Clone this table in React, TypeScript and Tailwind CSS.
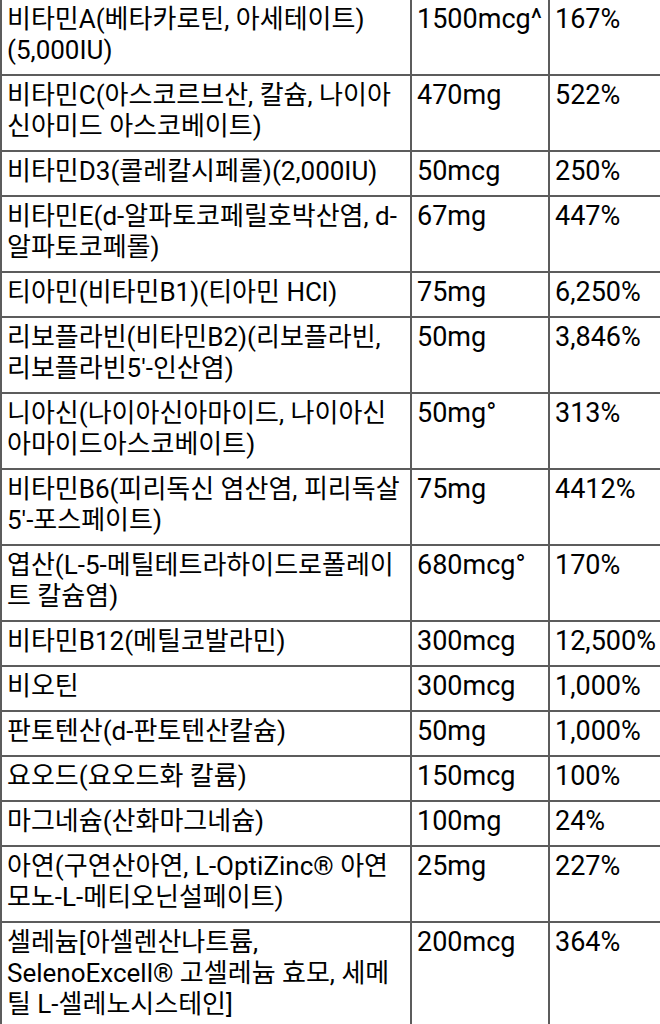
const rows: { name: string[]; amount: string; dv: string }[] = [
  { name: ["비타민A(베타카로틴, 아세테이트)", "(5,000IU)"], amount: "1500mcg^", dv: "167%" },
  { name: ["비타민C(아스코르브산, 칼슘, 나이아", "신아미드 아스코베이트)"], amount: "470mg", dv: "522%" },
  { name: ["비타민D3(콜레칼시페롤)(2,000IU)"], amount: "50mcg", dv: "250%" },
  { name: ["비타민E(d-알파토코페릴호박산염, d-", "알파토코페롤)"], amount: "67mg", dv: "447%" },
  { name: ["티아민(비타민B1)(티아민 HCl)"], amount: "75mg", dv: "6,250%" },
  { name: ["리보플라빈(비타민B2)(리보플라빈,", "리보플라빈5'-인산염)"], amount: "50mg", dv: "3,846%" },
  { name: ["니아신(나이아신아마이드, 나이아신", "아마이드아스코베이트)"], amount: "50mg°", dv: "313%" },
  { name: ["비타민B6(피리독신 염산염, 피리독살", "5'-포스페이트)"], amount: "75mg", dv: "4412%" },
  { name: ["엽산(L-5-메틸테트라하이드로폴레이", "트 칼슘염)"], amount: "680mcg°", dv: "170%" },
  { name: ["비타민B12(메틸코발라민)"], amount: "300mcg", dv: "12,500%" },
  { name: ["비오틴"], amount: "300mcg", dv: "1,000%" },
  { name: ["판토텐산(d-판토텐산칼슘)"], amount: "50mg", dv: "1,000%" },
  { name: ["요오드(요오드화 칼륨)"], amount: "150mcg", dv: "100%" },
  { name: ["마그네슘(산화마그네슘)"], amount: "100mg", dv: "24%" },
  { name: ["아연(구연산아연, L-OptiZinc® 아연", "모노-L-메티오닌설페이트)"], amount: "25mg", dv: "227%" },
  {
    name: ["셀레늄[아셀렌산나트륨,", "SelenoExcell® 고셀레늄 효모, 세메", "틸 L-셀레노시스테인]"],
    amount: "200mcg",
    dv: "364%",
  },
]

export default function App() {
  return (
    <div
      className="min-h-screen w-[660px] overflow-hidden bg-white leading-[31px] text-black"
      style={{ fontFamily: 'Roboto, "Noto Sans CJK KR", sans-serif' }}
    >
      <div className="grid grid-cols-[412px_138px_1fr]">
        {rows.map((r, i) => (
          <div key={i} className="contents">
            <div className="border-b-2 border-l-2 border-r-2 border-[#5c5c5c] pl-[5px] pt-[4px] pb-[8px] text-[26px]">
              {r.name.map((line, j) => (
                <div key={j} className="whitespace-nowrap">
                  {line}
                </div>
              ))}
            </div>
            <div className="border-b-2 border-r-2 border-[#5c5c5c] pl-[5px] pt-[4px] pb-[8px] text-[27px] whitespace-nowrap">
              {r.amount}
            </div>
            <div className="border-b-2 border-[#5c5c5c] pl-[5px] pt-[4px] pb-[8px] text-[27px] whitespace-nowrap">
              {r.dv}
            </div>
          </div>
        ))}
      </div>
    </div>
  )
}
